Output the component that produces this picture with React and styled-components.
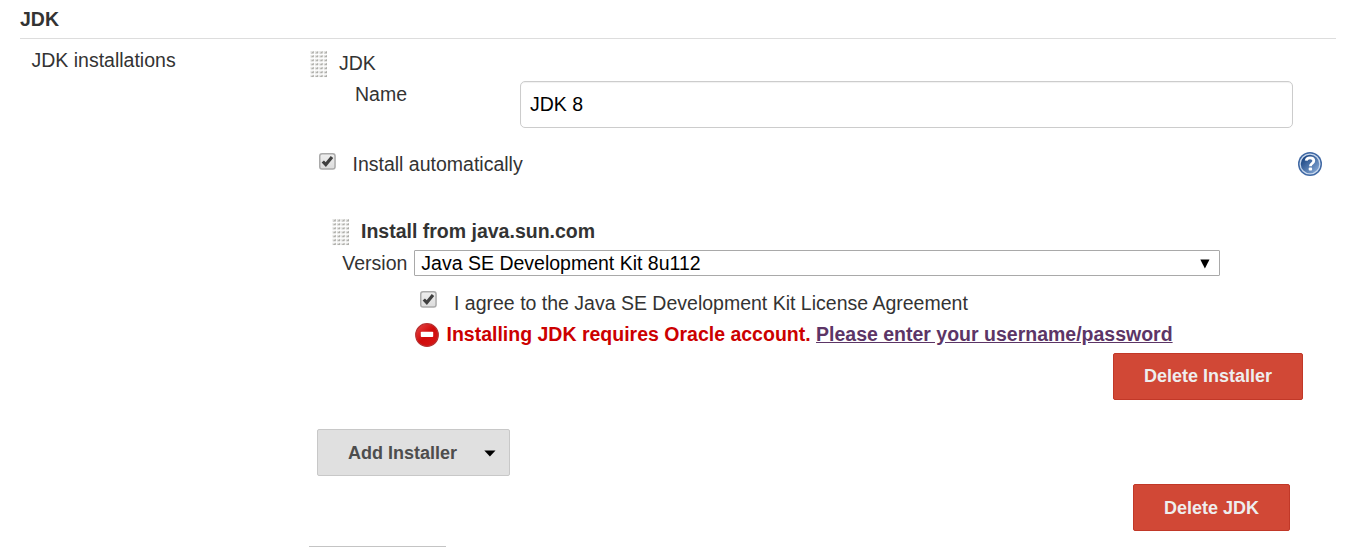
import React from "react";
import styled, { createGlobalStyle, css } from "styled-components";

const Global = createGlobalStyle`
  * { box-sizing: border-box; }
  body { margin: 0; background: #fff; overflow: hidden; }
  body, input, select, button { font-family: "Liberation Sans", Arial, sans-serif; font-size: 19.5px; }
`;

const Page = styled.main`
  height: 547px;
  padding: 0 16px 0 20px;
  overflow: hidden;
  color: #333;
  line-height: 22px;
`;
const SectionTitle = styled.h2`
  margin: 0;
  height: 39px;
  padding-top: 8px;
  border-bottom: 1px solid #ddd;
  font-size: 19.5px;
  line-height: 22px;
`;
const Section = styled.section`
  display: grid;
  grid-template-columns: 289px 1fr;
`;
const SectionLabel = styled.div`
  padding: 10px 0 0 11.5px;
`;
const Body = styled.div`
  padding-top: 12px;
`;
const Row = styled.div`
  display: flex;
  align-items: ${(p) => p.$align || "center"};
  height: ${(p) => p.$h}px;
  margin-top: ${(p) => p.$top || 0}px;
  padding-left: ${(p) => p.$indent || 0}px;
  padding-right: ${(p) => p.$end || 0}px;
`;
const Label = styled.label`
  white-space: nowrap;
  font-weight: ${(p) => (p.$bold ? 700 : 400)};
  margin-left: ${(p) => p.$gap || 0}px;
  margin-bottom: ${(p) => p.$lift || 0}px;
`;
const NameLabel = styled(Label)`
  width: 165px;
  padding-top: 2px;
`;
const TextInput = styled.input`
  width: 773px;
  height: 47px;
  padding: 0 9px 1px;
  border: 1px solid #ccc;
  border-radius: 5px;
  box-shadow: inset 0 1px 1px rgba(0, 0, 0, 0.06);
  color: #000;
  outline: none;
`;
const SelectBox = styled.div`
  display: flex;
  align-items: center;
  justify-content: space-between;
  width: 806px;
  height: 26px;
  margin-left: 6.5px;
  padding: 0 9px 0 6.5px;
  border: 1px solid #a9a9a9;
  border-radius: 1px;
  color: #000;
`;
const SelectArrow = styled.svg`
  margin-top: 1px;
`;
const Check = styled.span`
  display: flex;
  flex: none;
  width: 17px;
  height: 17px;
  margin-bottom: ${(p) => p.$lift}px;
`;
const Spacer = styled.span`
  flex: 1;
`;
const ErrorText = styled.strong`
  margin: 0 0 2px 7.5px;
  color: #c00;
  white-space: nowrap;
`;
const AccountLink = styled.a`
  color: #5c3566;
  text-decoration: underline;
`;
const tones = {
  danger: css`
    background: #d14836;
    border-color: #c13828;
    color: #eee;
  `,
  plain: css`
    background: #e0e0e0;
    border-color: #c8c8c8;
    color: #4d4d4d;
  `,
};
const Button = styled.button`
  display: flex;
  align-items: center;
  flex: none;
  width: ${(p) => p.$w}px;
  height: 47px;
  padding: ${(p) => (p.$drop ? "1px 0 0 30px" : "0 0 1px 30px")};
  border: 1px solid;
  border-radius: 2px;
  font-size: 18px;
  font-weight: 700;
  ${(p) => tones[p.$tone]}
`;
const Caret = styled.svg`
  margin-left: 27px;
`;

function Grip() {
  const dots = [];
  for (let r = 0; r < 7; r++)
    for (let c = 0; c < 4; c++) {
      const x = 0.4 + c * 4.4;
      const y = r * 3.95;
      dots.push(<rect key={`s${r}-${c}`} x={x} y={y} width="3.4" height="2.4" fill="#d4d4d0" opacity=".6" />);
      dots.push(<path key={`${r}-${c}`} d={`M${x + 3.4} ${y}v2.4h-3.2z`} fill="#a4a4a0" opacity=".85" />);
    }
  return <svg width="18" height="27" viewBox="0 0 18 27">{dots}</svg>;
}

function Checkbox({ lift }) {
  return (
    <Check $lift={lift}>
      <svg width="17" height="17" viewBox="0 0 17 17">
        <defs>
          <linearGradient id="face" x1="0" y1="0" x2="0" y2="1">
            <stop offset="0" stopColor="#eee" />
            <stop offset="1" stopColor="#dcdcdc" />
          </linearGradient>
        </defs>
        <rect x=".75" y=".75" width="15.3" height="15.3" rx="2.3" fill="url(#face)" stroke="#aaa" strokeWidth="1.5" />
        <path d="M3.8 8.5l3 3.1L13 4.1" fill="none" stroke="#404040" strokeWidth="3.2" />
      </svg>
    </Check>
  );
}

function HelpIcon() {
  return (
    <svg width="24" height="24" viewBox="0 0 24 24">
      <defs>
        <linearGradient id="help" x1="0" y1="0" x2="1" y2="1">
          <stop offset="0.2" stopColor="#204a87" />
          <stop offset="0.9" stopColor="#86a9d6" />
        </linearGradient>
      </defs>
      <circle cx="12" cy="12" r="12" fill="#3f68a4" />
      <circle cx="12" cy="12" r="9.9" fill="url(#help)" stroke="#c9d8ec" strokeWidth="1.3" />
      <path d="M8.2 8.6C8.5 6.5 10 5.8 12 5.8c2.3 0 3.8 1.1 3.8 3 0 2.7-3.4 2.7-3.4 5.4" fill="none" stroke="#fff" strokeWidth="2.8" />
      <rect x="10.7" y="15.6" width="3.4" height="3" rx=".8" fill="#fff" />
    </svg>
  );
}

function ErrorIcon() {
  return (
    <svg width="24" height="24" viewBox="0 0 24 24">
      <defs>
        <linearGradient id="stop" x1="0" y1="0" x2="1" y2="1">
          <stop offset="0" stopColor="#e84a4a" />
          <stop offset="0.5" stopColor="#d00a0a" />
          <stop offset="1" stopColor="#d81818" />
        </linearGradient>
      </defs>
      <circle cx="12" cy="12" r="11.3" fill="url(#stop)" stroke="#b83030" strokeWidth="1.2" />
      <rect x="5.8" y="8.8" width="12.4" height="5.2" rx=".8" fill="#fff" />
    </svg>
  );
}

const NextButtonEdge = styled.div`
  width: 137px;
  height: 1px;
  margin-top: 15px;
  background: #c4c4c4;
`;

export default function App() {
  return (
    <>
      <Global />
      <Page>
        <SectionTitle>JDK</SectionTitle>
        <Section>
          <SectionLabel>JDK installations</SectionLabel>
          <Body>
            <Row $h={27} $indent={1}>
              <Grip />
              <Label $gap={11} $lift={4}>JDK</Label>
            </Row>
            <Row $h={47} $top={3} $indent={46} $align="flex-start">
              <NameLabel>Name</NameLabel>
              <TextInput defaultValue="JDK 8" />
            </Row>
            <Row $h={24} $top={24} $indent={10} $end={14}>
              <Checkbox lift={5} />
              <Label $gap={16.5}>Install automatically</Label>
              <Spacer />
              <HelpIcon />
            </Row>
            <Row $h={27} $top={43} $indent={23}>
              <Grip />
              <Label $gap={11} $lift={4} $bold>Install from java.sun.com</Label>
            </Row>
            <Row $h={26} $top={4} $indent={33.3}>
              <Label>Version</Label>
              <SelectBox>
                Java SE Development Kit 8u112
                <SelectArrow width="10" height="10" viewBox="0 0 10 10"><path d="M.3.6h9.2L4.9 9.6z" fill="#000" /></SelectArrow>
              </SelectBox>
            </Row>
            <Row $h={24} $top={15} $indent={111}>
              <Checkbox lift={8} />
              <Label $gap={17}>I agree to the Java SE Development Kit License Agreement</Label>
            </Row>
            <Row $h={24} $top={8} $indent={106}>
              <ErrorIcon />
              <ErrorText>
                Installing JDK requires Oracle account. <AccountLink>Please enter your username/password</AccountLink>
              </ErrorText>
            </Row>
            <Row $h={47} $top={6} $end={33}>
              <Spacer />
              <Button $tone="danger" $w={190}>Delete Installer</Button>
            </Row>
            <Row $h={47} $top={29} $indent={8}>
              <Button $tone="plain" $w={193} $drop>
                Add Installer
                <Caret width="12" height="7" viewBox="0 0 12 7"><path d="M.3.4h11.2L5.9 6.4z" fill="#000" /></Caret>
              </Button>
            </Row>
            <Row $h={47} $top={8} $end={46}>
              <Spacer />
              <Button $tone="danger" $w={157} $drop>Delete JDK</Button>
            </Row>
            <NextButtonEdge />
          </Body>
        </Section>
      </Page>
    </>
  );
}
